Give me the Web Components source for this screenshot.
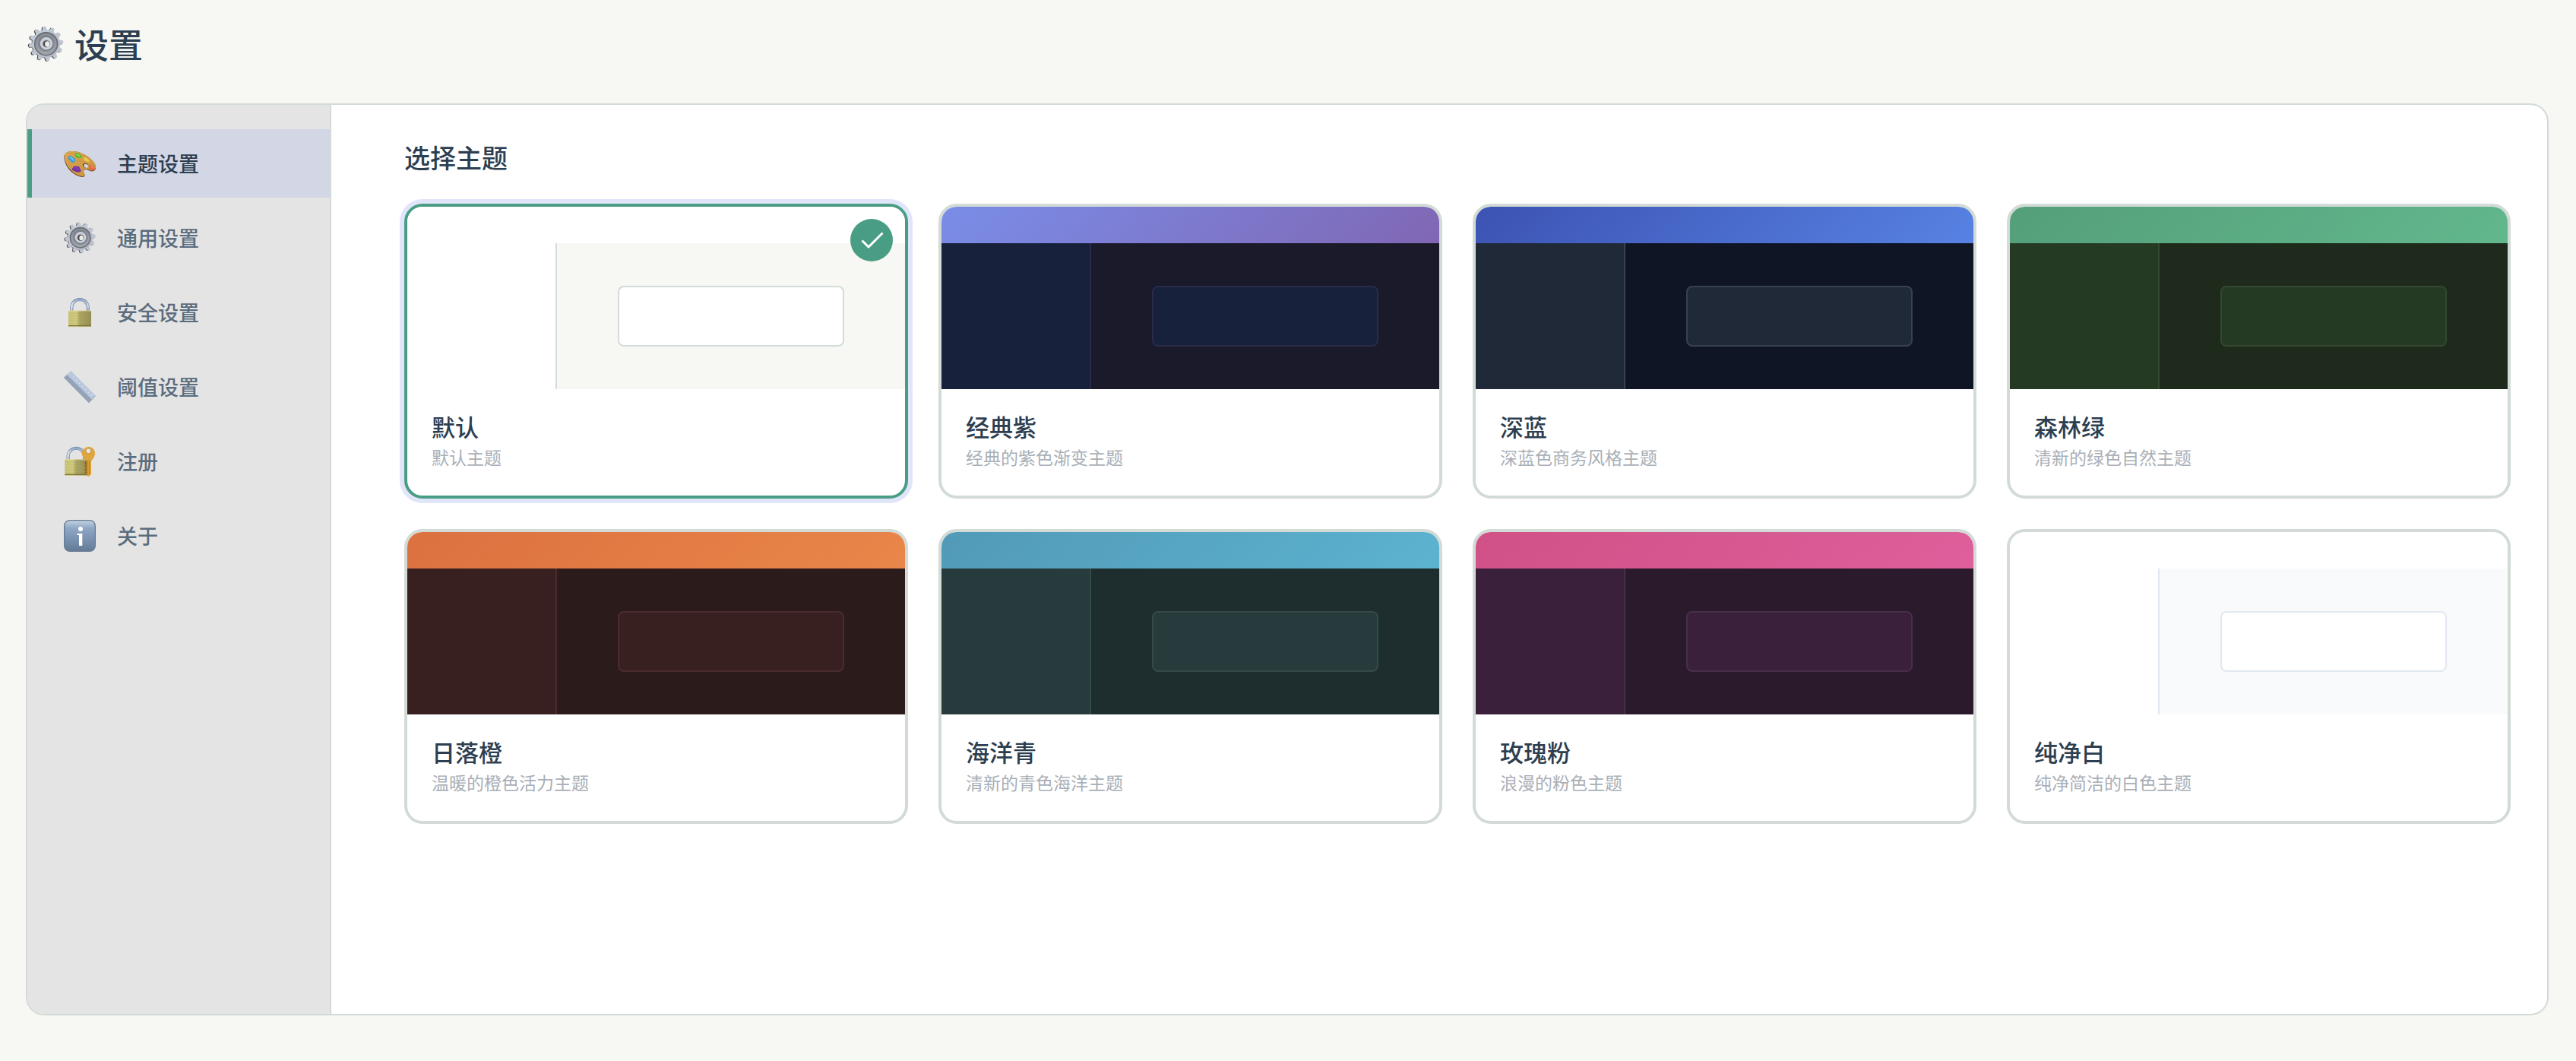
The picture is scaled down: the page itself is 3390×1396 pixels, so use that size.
<!DOCTYPE html>
<html lang="zh-CN">
<head>
<meta charset="UTF-8">
<meta name="viewport" content="width=device-width, initial-scale=1.0">
<title>设置</title>
<style>
  :root {
    --color-fondo: #f7f8f3;
    --color-panel: #ffffff;
    --color-lateral: #e4e4e4;
    --color-activo: #d3d6e4;
    --color-borde: #d2dbd6;
    --color-primario: #4a9d85;
    --color-texto: #2c3e50;
    --color-texto-suave: #5a6c7d;
    --color-texto-tenue: #a9afb7;
  }

  body {
    margin: 0;
    background: var(--color-fondo);
    color: var(--color-texto);
    font-family: "Noto Sans CJK SC", "Noto Sans", sans-serif;
  }
</style>
</head>
<body>

<settings-page>
  <emoji-icon slot="icon" name="gear" size="large"></emoji-icon>
  <span slot="title">设置</span>

  <nav-item slot="nav" active><emoji-icon slot="icon" name="palette"></emoji-icon>主题设置</nav-item>
  <nav-item slot="nav"><emoji-icon slot="icon" name="gear"></emoji-icon>通用设置</nav-item>
  <nav-item slot="nav"><emoji-icon slot="icon" name="lock"></emoji-icon>安全设置</nav-item>
  <nav-item slot="nav"><emoji-icon slot="icon" name="ruler"></emoji-icon>阈值设置</nav-item>
  <nav-item slot="nav"><emoji-icon slot="icon" name="lock-key"></emoji-icon>注册</nav-item>
  <nav-item slot="nav"><emoji-icon slot="icon" name="info"></emoji-icon>关于</nav-item>

  <theme-picker heading="选择主题"></theme-picker>
</settings-page>

<script>
// ===== ICONS =====
// All icons share a 144 x 144 canvas.

const teeth = (color) => Array.from({ length: 12 }, (_, i) =>
  `<path d="M62 26 L65 12 Q71 8 77 12 L80 26Z" fill="${color}" transform="rotate(${i * 30 - 6} 71 71)"/>`
).join("");

const LOCK_DEFS = `
  <linearGradient id="brass" x1="0" x2="1">
    <stop offset="0" stop-color="#c9c577"/>
    <stop offset=".35" stop-color="#d0cb80"/>
    <stop offset=".5" stop-color="#aca561"/>
    <stop offset="1" stop-color="#979056"/>
  </linearGradient>
  <linearGradient id="steel" x1="0" y1="0" x2="0" y2="1">
    <stop offset="0" stop-color="#8fa9cc"/>
    <stop offset=".5" stop-color="#c8d6e8"/>
    <stop offset="1" stop-color="#8b9bb2"/>
  </linearGradient>`;

const lock = (x, y) => `
  <g transform="translate(${x} ${y})">
    <path d="M13 54V36a32 31 0 0 1 64 0V54" fill="none" stroke="#6f7b8c" stroke-width="12"/>
    <path d="M13 54V36a32 31 0 0 1 64 0V54" fill="none" stroke="url(#steel)" stroke-width="9"/>
    <path d="M12 50V36a33 32 0 0 1 10 -23" fill="none" stroke="#e8f0fa" stroke-width="3"/>
    <rect x="0" y="49" width="90" height="64" rx="2" fill="url(#brass)"/>
    <path d="M0 60H90M0 70H90M0 80H90M0 90H90M0 100H90" stroke="#8d8648" stroke-opacity=".25" stroke-width="2"/>
    <path d="M1 50H89" stroke="#eae6a8" stroke-width="2"/>
    <path d="M0 109H90" stroke="#766c34" stroke-width="4"/>
    <path d="M0 112H90" stroke="#d3c982" stroke-width="2"/>
  </g>`;

const ICONS = {
  gear: `
    <defs>
      <linearGradient id="rim" x1="0" y1="0" x2="1" y2="1">
        <stop offset="0" stop-color="#c4d0dc"/>
        <stop offset="1" stop-color="#b5b5c6"/>
      </linearGradient>
      <linearGradient id="dish" x1="0" y1="0" x2="0" y2="1">
        <stop offset="0" stop-color="#787d84"/>
        <stop offset="1" stop-color="#a0a4ac"/>
      </linearGradient>
    </defs>
    <g transform="translate(-3 1)">${teeth("#4a4541")}<circle cx="71" cy="71" r="48" fill="#4a4541"/></g>
    ${teeth("#bfc6d3")}
    <circle cx="71" cy="71" r="49" fill="url(#rim)"/>
    <circle cx="71" cy="71" r="42" fill="#676b71"/>
    <circle cx="71" cy="71" r="38" fill="url(#dish)"/>
    <circle cx="71" cy="71" r="33" fill="none" stroke="#a5aab2" stroke-width="2"/>
    <circle cx="71" cy="71" r="27" fill="#7d828b"/>
    <circle cx="72" cy="70" r="22" fill="#cdd3de"/>
    <circle cx="72" cy="70" r="15" fill="#b8bdc8"/>
    <circle cx="72" cy="71" r="12" fill="#4c4846"/>
    <ellipse cx="75" cy="72" rx="8" ry="10" fill="#ebebe8"/>`,

  palette: `
    <defs>
      <linearGradient id="wood" x1="0" y1="0" x2="1" y2="1">
        <stop offset="0" stop-color="#dda650"/>
        <stop offset="1" stop-color="#c8913f"/>
      </linearGradient>
    </defs>
    <path d="M7 48C5 31 24 22 45 24C73 26 100 43 114 57C127 69 136 85 131 95C126 106 113 104 104 100C95 95 85 94 84 103C83 110 91 114 88 122C83 130 65 124 51 116C27 103 9 77 7 48Z" fill="#6e4a29"/>
    <path fill-rule="evenodd" d="M8 43C7 29 25 22 46 24C74 26 100 42 115 56C128 68 136 82 131 92C126 103 114 101 105 97C95 92 84 92 84 101C84 108 91 112 88 119C83 127 65 121 52 113C27 99 10 71 8 43Z" fill="url(#wood)"/>
    <ellipse cx="92" cy="80" rx="11" ry="9" transform="rotate(25 92 80)" fill="#6e4a29"/>
    <ellipse cx="94" cy="82" rx="9" ry="7" transform="rotate(25 94 82)" fill="#d3d6e4"/>
    <path d="M25 33C49 28 76 35 98 51M20 58C27 79 41 96 60 109M58 64C67 61 76 61 81 67" fill="none" stroke="#b17e35" stroke-opacity=".35" stroke-width="3"/>
    <path d="M50 33C60 27 68 34 76 43C76 51 69 54 61 50C54 48 50 45 50 33Z" fill="#55b832"/>
    <path d="M55 37C61 35 65 41 69 44" fill="none" stroke="#9be36a" stroke-width="4"/>
    <path d="M23 47C28 37 39 43 47 51C57 58 50 69 40 69C32 68 32 58 23 55Z" fill="#3c9bd8"/>
    <path d="M29 50C35 46 43 56 45 62" fill="none" stroke="#83cff1" stroke-width="4"/>
    <path d="M84 48C94 45 104 57 109 64C103 69 93 64 88 61C83 57 86 53 84 48Z" fill="#eac94d"/>
    <path d="M42 89C44 79 53 83 61 83C70 84 70 95 75 101C67 111 54 105 45 101C36 99 37 92 42 89Z" fill="#7630a4"/>
    <path d="M49 91C57 86 62 94 66 98" fill="none" stroke="#a261c5" stroke-width="3"/>
    <path d="M106 78C114 78 126 86 130 96C124 102 112 96 106 91C111 86 108 82 106 78Z" fill="#e35549"/>
    <path d="M113 84L122 92" stroke="#f99b7c" stroke-width="4"/>`,

  lock: `<defs>${LOCK_DEFS}</defs>${lock(24, 16)}`,

  ruler: `
    <path d="M7 35L34 10L131 107L105 134Z" fill="#a3b1c6"/>
    <path d="M17 25L34 10L131 107L115 122Z" fill="#bac8dd"/>
    <path d="M7 35L17 25L115 122L105 134Z" fill="#95a3b7"/>
    <path d="M17 25L115 122" stroke="#8491a6" stroke-width="2"/>
    <path d="M42 36L49 29M54 48L61 41M66 60L73 53M78 72L85 65M90 84L97 77M102 96L109 89M112 107L120 100" stroke="#dce6f3" stroke-width="3"/>
    <path d="M7 35L105 134L131 107" fill="none" stroke="#8492a6" stroke-width="2"/>`,

  "lock-key": `
    <defs>${LOCK_DEFS}</defs>
    ${lock(10, 15)}
    <path d="M98 63L92 68V74L86 78L92 84L87 90L93 97L87 105L93 111L88 117L95 124L101 131Z" fill="#8a6324"/>
    <path d="M103 14C118 14 130 26 129 41C129 55 119 62 114 72V124L104 132L96 125V71C89 62 77 53 77 39C78 25 89 14 103 14Z" fill="#dea63c"/>
    <path d="M101 68V126M107 68V124" stroke="#b47c25" stroke-width="3"/>
    <path d="M86 26C89 21 95 18 100 17" fill="none" stroke="#f2cb70" stroke-width="3"/>
    <circle cx="103" cy="31" r="10" fill="#e8e8e4" stroke="#b47c25" stroke-width="2"/>`,

  info: `
    <defs>
      <linearGradient id="key" x1="0" y1="0" x2="0" y2="1">
        <stop offset="0" stop-color="#c3d0dd"/>
        <stop offset=".25" stop-color="#8da7c5"/>
        <stop offset="1" stop-color="#657b98"/>
      </linearGradient>
    </defs>
    <rect x="6" y="9" width="126" height="126" rx="24" fill="#667a94"/>
    <rect x="10" y="13" width="118" height="118" rx="20" fill="url(#key)"/>
    <circle cx="72" cy="45" r="9" fill="#fff"/>
    <path d="M58 63H79V111H66V69H58Z" fill="#fff"/>`
};

// ===== <emoji-icon> =====
class EmojiIcon extends HTMLElement {
  connectedCallback() {
    if (this.shadowRoot) return;
    this.attachShadow({ mode: "open" }).innerHTML = `
      <style>
        :host { display: block; width: 48px; height: 48px; flex: none; }
        :host([size="large"]) { width: 54px; height: 54px; }
        svg { display: block; width: 100%; height: 100%; overflow: visible; }
      </style>
      <svg viewBox="0 0 144 144" aria-hidden="true">${ICONS[this.getAttribute("name")] || ""}</svg>
    `;
  }
}

// ===== <nav-item> =====
class NavItem extends HTMLElement {
  connectedCallback() {
    if (this.shadowRoot) return;
    const current = this.hasAttribute("active") ? ` aria-current="page"` : "";
    this.attachShadow({ mode: "open" }).innerHTML = `
      <style>
        :host { display: block; }
        button {
          display: flex;
          align-items: center;
          gap: 24px;
          box-sizing: border-box;
          width: 100%;
          height: 90px;
          margin: 0;
          padding: 0 40px;
          border: 0;
          border-left: 6px solid transparent;
          background: none;
          color: var(--color-texto-suave);
          font: inherit;
          font-size: 27px;
          font-weight: 500;
          line-height: 40px;
          text-align: left;
          cursor: pointer;
        }
        button:hover { color: var(--color-texto); }
        button[aria-current] {
          border-left-color: var(--color-primario);
          background: var(--color-activo);
          color: var(--color-texto);
        }
      </style>
      <button type="button"${current}>
        <slot name="icon"></slot>
        <span><slot></slot></span>
      </button>
    `;
  }
}

// ===== <theme-card> =====
// The preview colours come in through custom properties on the host.
class ThemeCard extends HTMLElement {
  connectedCallback() {
    if (this.shadowRoot) return;
    this.attachShadow({ mode: "open" });
    this.render();
  }

  set selected(value) {
    this.toggleAttribute("selected", value);
    const button = this.shadowRoot && this.shadowRoot.querySelector("button");
    if (button) button.setAttribute("aria-pressed", String(value));
  }

  render() {
    this.shadowRoot.innerHTML = `
      <style>
        :host { display: block; min-width: 0; }
        button {
          display: block;
          position: relative;
          box-sizing: border-box;
          width: 100%;
          margin: 0;
          padding: 0;
          border: 4px solid var(--color-borde);
          border-radius: 24px;
          overflow: hidden;
          background: var(--color-panel);
          color: inherit;
          font: inherit;
          text-align: left;
          cursor: pointer;
        }
        :host([selected]) button {
          border-color: var(--color-primario);
          box-shadow: 0 0 0 6px #e0e5fa;
        }
        .preview {
          display: grid;
          grid-template: 48px 192px / 30% 1fr;
        }
        .top { grid-column: 1 / -1; background: var(--top); }
        .side {
          border-right: 2px solid var(--line);
          background: var(--surface);
        }
        .main {
          display: flex;
          align-items: center;
          justify-content: center;
          background: var(--back);
        }
        .box {
          box-sizing: border-box;
          width: 65%;
          height: 80px;
          border: 2px solid var(--line);
          border-radius: 8px;
          background: var(--surface);
        }
        .info { display: block; padding: 30px 32px 36px; }
        .name {
          display: block;
          margin-bottom: 6px;
          font-size: 31px;
          font-weight: 500;
          line-height: 38px;
        }
        .desc {
          display: block;
          color: var(--color-texto-tenue);
          font-size: 23px;
          line-height: 30px;
        }
        .check {
          display: none;
          position: absolute;
          top: 16px;
          right: 16px;
          width: 56px;
          height: 56px;
          border-radius: 50%;
          background: var(--color-primario);
        }
        :host([selected]) .check { display: block; }
      </style>
      <button type="button" aria-pressed="${this.hasAttribute("selected")}">
        <span class="preview" aria-hidden="true">
          <span class="top"></span>
          <span class="side"></span>
          <span class="main"><span class="box"></span></span>
        </span>
        <span class="info">
          <span class="name"><slot name="name"></slot></span>
          <span class="desc"><slot></slot></span>
        </span>
        <svg class="check" viewBox="0 0 56 56" aria-hidden="true">
          <path d="M15.5 28.5L24 37L42.5 18.5" fill="none" stroke="#fff" stroke-width="3"/>
        </svg>
      </button>
    `;
  }
}

// ===== <theme-picker> =====
const THEMES = [
  { name: "默认", desc: "默认主题", top: "#ffffff", surface: "#ffffff", back: "#f7f8f3", line: "#d3dcd8" },
  { name: "经典紫", desc: "经典的紫色渐变主题", top: "#7a8de8, #8067b4", surface: "#17213b", back: "#1a1a2b", line: "#2a2a4a" },
  { name: "深蓝", desc: "深蓝色商务风格主题", top: "#3c53b3, #5782e3", surface: "#202938", back: "#101526", line: "#374151" },
  { name: "森林绿", desc: "清新的绿色自然主题", top: "#549f7a, #62b78d", surface: "#253a23", back: "#1e2b1c", line: "#34482f" },
  { name: "日落橙", desc: "温暖的橙色活力主题", top: "#dc7140, #e98649", surface: "#382021", back: "#2b1b1b", line: "#4a2c2e" },
  { name: "海洋青", desc: "清新的青色海洋主题", top: "#529ab7, #5cb3d0", surface: "#273b3d", back: "#1e2d2e", line: "#334a49" },
  { name: "玫瑰粉", desc: "浪漫的粉色主题", top: "#cf5186, #dd609c", surface: "#3a203a", back: "#2b1a2c", line: "#482e48" },
  { name: "纯净白", desc: "纯净简洁的白色主题", top: "#ffffff", surface: "#ffffff", back: "#f9fafc", line: "#e2e8f0" }
];

class ThemePicker extends HTMLElement {
  connectedCallback() {
    if (this.shadowRoot) return;
    this.attachShadow({ mode: "open" }).innerHTML = `
      <style>
        :host { display: block; }
        h2 {
          margin: 0 0 40px;
          font-size: 34px;
          font-weight: 500;
          line-height: 42px;
        }
        .grid {
          display: grid;
          grid-template-columns: repeat(auto-fill, minmax(560px, 1fr));
          gap: 40px;
        }
      </style>
      <h2>${this.getAttribute("heading")}</h2>
      <div class="grid">
        ${THEMES.map((theme, i) => `
          <theme-card ${i === 0 ? "selected" : ""} style="
            --top: ${theme.top.includes(",") ? `linear-gradient(135deg, ${theme.top})` : theme.top};
            --surface: ${theme.surface}; --back: ${theme.back}; --line: ${theme.line}">
            <span slot="name">${theme.name}</span>${theme.desc}
          </theme-card>
        `).join("")}
      </div>
    `;

    const cards = this.shadowRoot.querySelectorAll("theme-card");
    cards.forEach((card) => {
      card.addEventListener("click", () => {
        cards.forEach((other) => { other.selected = other === card; });
      });
    });
  }
}

// ===== <settings-page> =====
class SettingsPage extends HTMLElement {
  connectedCallback() {
    if (this.shadowRoot) return;
    this.attachShadow({ mode: "open" }).innerHTML = `
      <style>
        :host {
          display: flex;
          flex-direction: column;
          box-sizing: border-box;
          min-height: 100vh;
          padding: 26px 36px 60px 34px;
        }
        h1 {
          display: flex;
          align-items: center;
          gap: 10px;
          margin: 0 0 46px;
          font-size: 45px;
          font-weight: 500;
          line-height: 64px;
        }
        .panel {
          display: flex;
          flex: 1;
          border: 2px solid var(--color-borde);
          border-radius: 24px;
          overflow: hidden;
          background: var(--color-panel);
        }
        nav {
          display: flex;
          flex-direction: column;
          gap: 8px;
          box-sizing: border-box;
          width: 400px;
          flex: none;
          padding: 32px 0;
          border-right: 2px solid var(--color-borde);
          background: var(--color-lateral);
        }
        main {
          flex: 1;
          min-width: 0;
          padding: 48px 48px 48px 96px;
        }
      </style>
      <h1><slot name="icon"></slot><slot name="title"></slot></h1>
      <div class="panel">
        <nav><slot name="nav"></slot></nav>
        <main><slot></slot></main>
      </div>
    `;
  }
}

customElements.define("emoji-icon", EmojiIcon);
customElements.define("nav-item", NavItem);
customElements.define("theme-card", ThemeCard);
customElements.define("theme-picker", ThemePicker);
customElements.define("settings-page", SettingsPage);
</script>
</body>
</html>
